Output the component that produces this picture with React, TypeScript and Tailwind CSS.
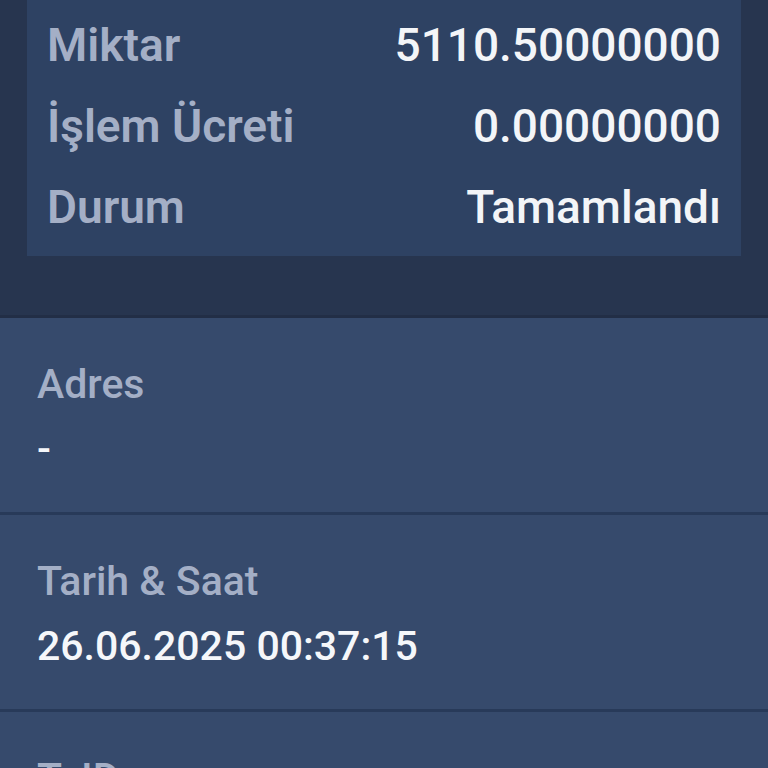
export default function App() {
  return (
    <main className="min-h-screen w-full bg-[#364a6c] font-['Roboto',sans-serif]">
      {/* Summary card */}
      <div className="bg-[#27354f] px-[27px] pb-[59px] border-b-[3px] border-[#222e46]">
        <div className="bg-[#2e4263] px-[20px] pt-[5px] pb-[8px]">
          <Row label="Miktar" value="5110.50000000" />
          <Row label="İşlem Ücreti" value="0.00000000" />
          <Row label="Durum" value="Tamamlandı" />
        </div>
      </div>

      {/* Detail rows */}
      <Detail label="Adres" value="-" />
      <Detail label="Tarih & Saat" value="26.06.2025 00:37:15" />
      <Detail label="TxID" value="" />
    </main>
  );
}

function Row({ label, value }: { label: string; value: string }) {
  return (
    <div className="flex items-center justify-between h-[81px] leading-[81px] text-[46px]">
      <span className="font-semibold text-[#a4afc6]">{label}</span>
      <span className="font-medium text-[#f3f5f8]">{value}</span>
    </div>
  );
}

function Detail({ label, value }: { label: string; value: string }) {
  return (
    <div className="flex flex-col gap-[17px] px-[37px] pt-[42px] pb-[39px] border-b-[3px] border-[#283a59] text-[41px] leading-[48px]">
      <span className="font-medium text-[#a4afc6]">{label}</span>
      <span className="font-medium text-[#f5f7fa] min-h-[48px]">{value}</span>
    </div>
  );
}
